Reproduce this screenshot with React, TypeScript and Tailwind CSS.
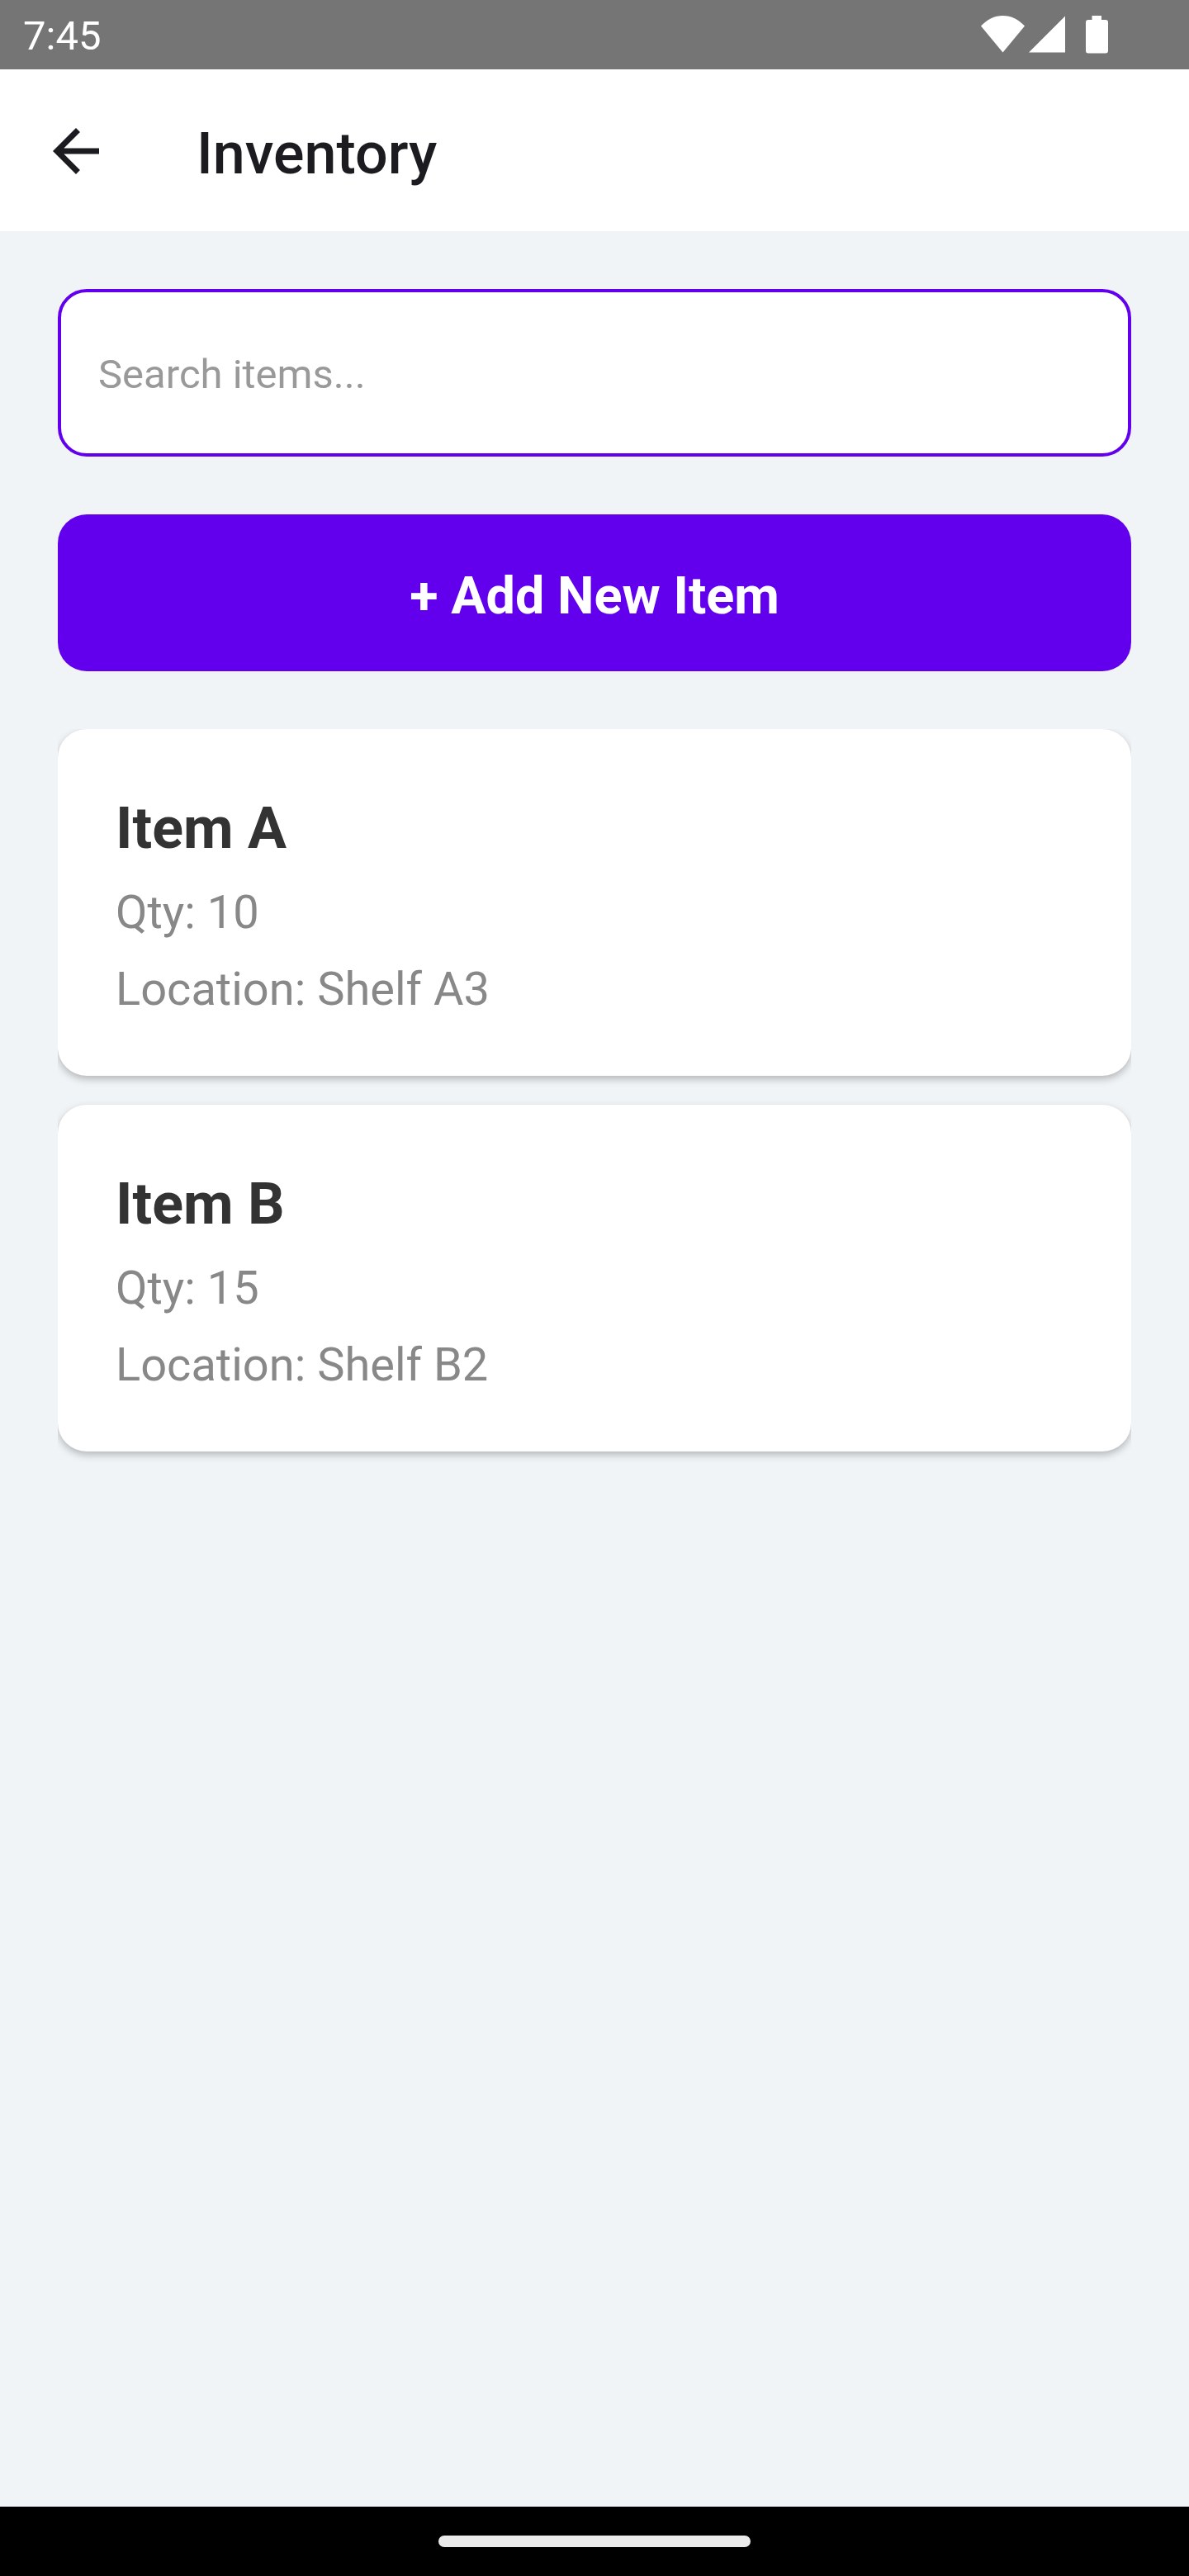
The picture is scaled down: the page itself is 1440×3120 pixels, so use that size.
type Item = { name: string; qty: number; location: string };

const items: Item[] = [
  { name: "Item A", qty: 10, location: "Shelf A3" },
  { name: "Item B", qty: 15, location: "Shelf B2" },
];

function StatusBar() {
  return (
    <div className="flex h-21 items-center justify-between bg-[#757575] pr-[98px] pl-7 text-white">
      <span className="pt-1 text-[49px] leading-[56px]">7:45</span>
      <div className="flex h-[46px] items-start">
        <svg aria-label="Wi-Fi" className="mr-[5px] h-[45px] w-[53px]" viewBox="0 0 53 45" fill="currentColor">
          <path d="M26.5 44.5 0 12.5C7.500 4.500 16.500 0 26.500 0S45.500 4.500 53 12.500Z" />
        </svg>
        <svg aria-label="Signal" className="mr-[25px] h-[45px] w-[44px]" viewBox="0 0 44 45" fill="currentColor">
          <path d="M44 .5V44.500H0Z" />
        </svg>
        <svg aria-label="Battery" className="h-[46px] w-[27px]" viewBox="0 0 27 46" fill="currentColor">
          <path d="M7.500 0H19V5H24Q27 5 27 8V42.500Q27 45.500 24 45.500H3Q0 45.500 0 42.500V8Q0 5 3 5H7.500Z" />
        </svg>
      </div>
    </div>
  );
}

function Header() {
  return (
    <header className="flex h-49 items-center bg-white pt-0.5 pl-[50px] text-[#1c1b1f]">
      <button type="button" aria-label="Back" className="size-21">
        <svg className="size-21" viewBox="0 0 24 24" fill="currentColor">
          <path d="M20 11H7.830l5.590-5.590L12 4l-8 8 8 8 1.410-1.410L7.830 13H20z" />
        </svg>
      </button>
      <h1 className="ml-26 pt-1.5 text-[70px] leading-[84px] font-medium">Inventory</h1>
    </header>
  );
}

function ItemCard({ item }: { item: Item }) {
  return (
    <li className="flex flex-col gap-4 rounded-[35px] bg-white px-[70px] pt-[72px] pb-[66px] shadow-[0_4px_10px_rgba(0,0,0,0.25)]">
      <h2 className="text-[70px] leading-[96px] font-bold text-[#333333]">{item.name}</h2>
      <p className="text-[56px] leading-[77px] text-[#888888]">Qty: {item.qty}</p>
      <p className="text-[56px] leading-[77px] text-[#888888]">Location: {item.location}</p>
    </li>
  );
}

export default function App() {
  return (
    <div className="flex min-h-screen flex-col bg-[#f0f4f7] font-[Roboto,sans-serif]">
      <StatusBar />
      <Header />
      <main className="flex grow flex-col px-[70px] pt-[70px]">
        <input
          type="text"
          aria-label="Search items"
          placeholder="Search items..."
          className="h-[203px] w-full rounded-[35px] border-4 border-[#6200ee] bg-white px-[45px] pt-1 text-[49px] text-[#333333] outline-none placeholder:text-[#999999]"
        />
        <button
          type="button"
          className="mt-[70px] h-[190px] w-full rounded-[35px] bg-[#6200ee] pt-2 text-[63px] font-bold text-white"
        >
          + Add New Item
        </button>
        <ul className="mt-[70px] flex grow flex-col gap-[35px] overflow-hidden">
          {items.map((item) => (
            <ItemCard key={item.name} item={item} />
          ))}
        </ul>
      </main>
      <div className="flex h-21 items-center justify-center bg-black">
        <div className="h-3.5 w-[378px] rounded-full bg-[#ebebeb]" />
      </div>
    </div>
  );
}
